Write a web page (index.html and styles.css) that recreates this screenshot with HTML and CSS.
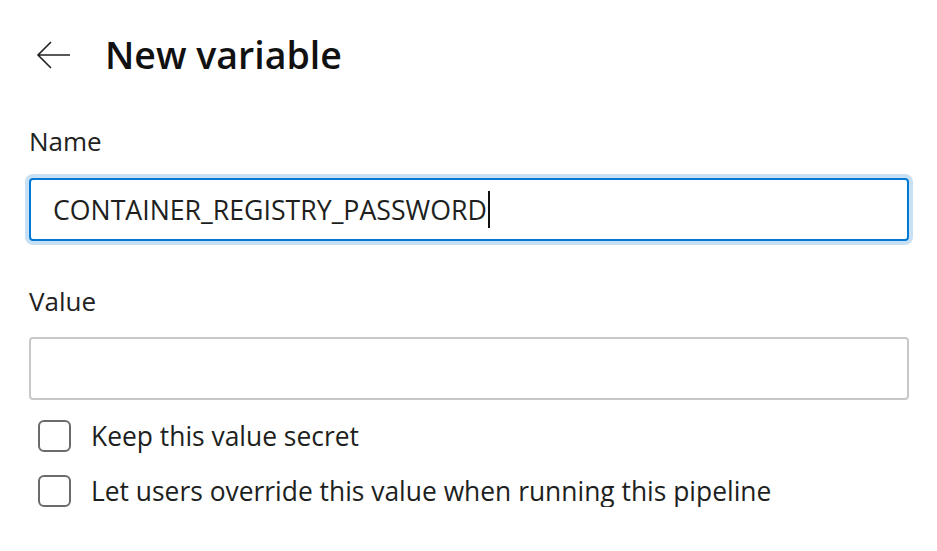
FILE: index.html
```html
<!DOCTYPE html>
<html>
<head>
<meta charset="utf-8">
<link rel="stylesheet" href="styles.css">
</head>
<body>
<div class="panel">
  <div class="header">
    <svg class="back" width="36" height="30" viewBox="0 0 36 30"><path d="M34 15H2M15 2L2 15l13 13" fill="none" stroke="#222" stroke-width="1.6"/></svg>
    <h1 class="title">New variable</h1>
  </div>
  <div class="field name-field">
    <label class="label">Name</label>
    <div class="input focused"><span class="value">CONTAINER_REGISTRY_PASSWORD</span><span class="caret"></span></div>
  </div>
  <div class="field value-field">
    <label class="label">Value</label>
    <div class="input"></div>
  </div>
  <div class="checks">
    <div class="check"><span class="box"></span><span class="check-text">Keep this value secret</span></div>
    <div class="check"><span class="box"></span><span class="check-text">Let users override this value when running this pipeline</span></div>
  </div>
</div>
</body>
</html>
```
FILE: styles.css
```css
html, body { margin: 0; padding: 0; background: #fff; }
body { font-family: "Open Sans", "Noto Sans", sans-serif; color: #201f1e; }
.panel { padding: 26px 28px 0 29px; width: 880px; }
.header { display: flex; align-items: center; height: 58px; }
.back { margin-left: 7px; width: 36px; height: 30px; }
.title { margin: 0 0 0 33px; font-size: 37.5px; font-weight: 600; color: #111; line-height: 58px; }
.field { display: flex; flex-direction: column; }
.name-field { margin-top: 40px; }
.value-field { margin-top: 43px; }
.label { font-size: 26px; line-height: 34px; color: #222; }
.input { margin-top: 20px; box-sizing: border-box; height: 63px; border: 2px solid #c8c8c8; border-radius: 4px; display: flex; align-items: center; padding-left: 22px; }
.value-field .input { height: 63px; margin-top: 19px; }
.input.focused { border-color: #0078d4; box-shadow: 0 0 0 4px #c7e0f4; }
.value { font-size: 26.7px; color: #201f1e; }
.caret { display: inline-block; width: 2px; height: 37px; background: #111; margin-left: 1px; }
.checks { display: flex; flex-direction: column; gap: 23px; margin-top: 20px; padding-left: 9px; }
.check { display: flex; align-items: center; height: 32px; }
.box { box-sizing: border-box; width: 33px; height: 32px; border: 2px solid #6b6b6b; border-radius: 6px; }
.check-text { margin-left: 20px; font-size: 26.4px; color: #201f1e; }
```
